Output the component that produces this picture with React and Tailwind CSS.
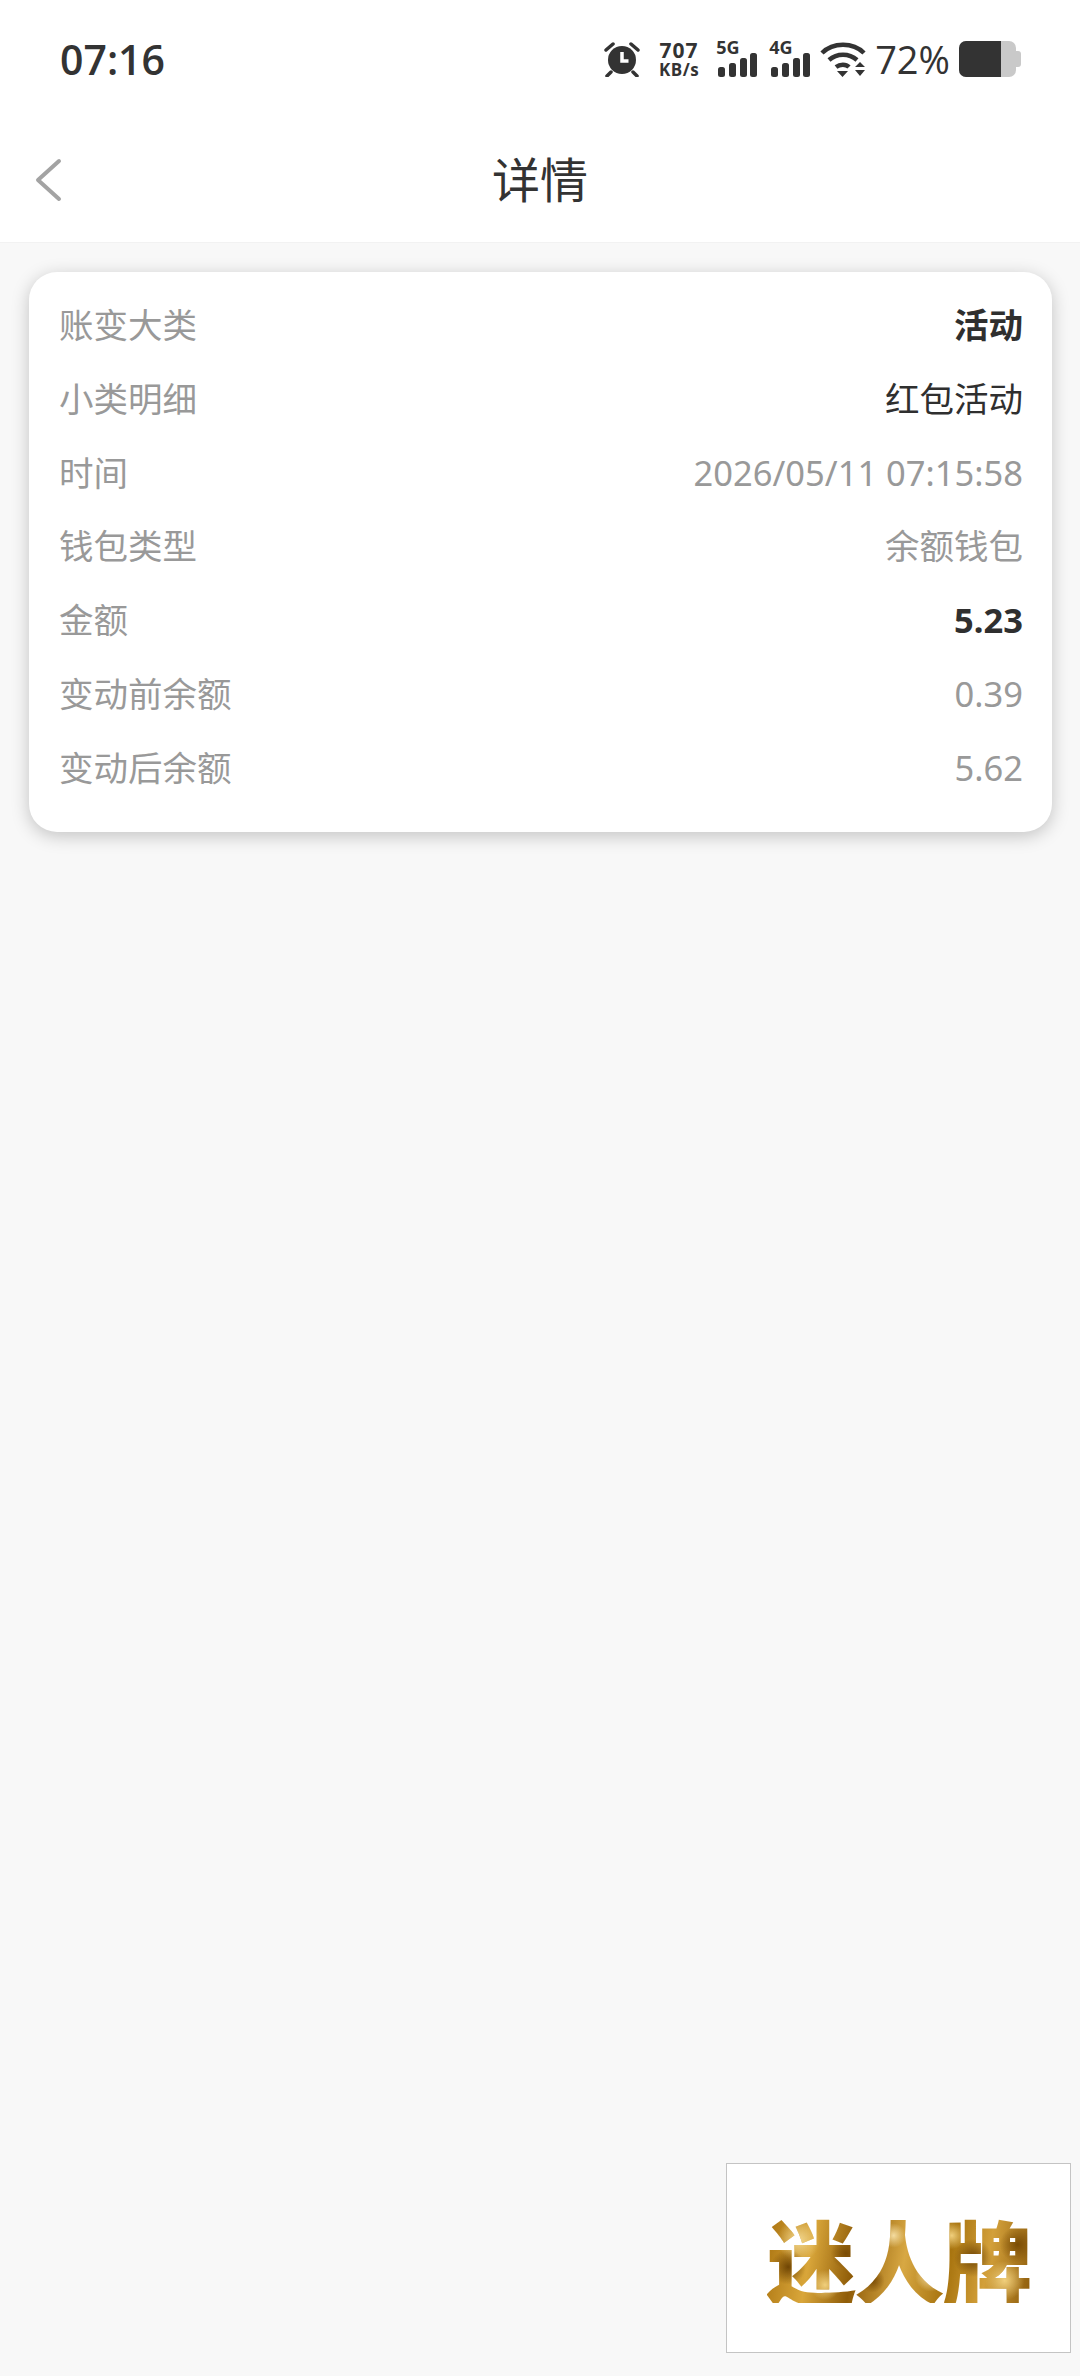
const CJK = "font-['Noto_Sans','Noto_Sans_CJK_SC',sans-serif]";

const rows = [
  { label: "账变大类", value: "活动", valueClass: "text-[#2f2f2f] font-bold" },
  { label: "小类明细", value: "红包活动", valueClass: "text-[#2f2f2f]" },
  { label: "时间", value: "2026/05/11 07:15:58", valueClass: "text-[#999999]" },
  { label: "钱包类型", value: "余额钱包", valueClass: "text-[#999999]" },
  { label: "金额", value: "5.23", valueClass: "text-[#2f2f2f] font-bold" },
  { label: "变动前余额", value: "0.39", valueClass: "text-[#999999]" },
  { label: "变动后余额", value: "5.62", valueClass: "text-[#999999]" },
];

const AlarmIcon = () => (
  <svg width="36" height="36" viewBox="0 0 36 36" fill="none">
    <circle cx="18" cy="19" r="14" fill="#333" />
    <path d="M18 11v9h6.500" stroke="#fff" strokeWidth="3.500" />
    <path d="M2 9l7-6M34 9l-7-6M7 31l-4 4M29 31l4 4" stroke="#333" strokeWidth="3.500" strokeLinecap="round" />
  </svg>
);

const Signal = ({ label }) => (
  <div className="relative w-[41px] h-[36px]">
    <span className="absolute left-0 top-[-3px] text-[18px] leading-[18px] font-bold text-[#333] font-['Open_Sans',sans-serif]">{label}</span>
    <svg className="absolute left-[2px] bottom-0" width="39" height="24" viewBox="0 0 39 24" fill="#333">
      <rect x="0" y="14" width="7" height="10" rx="2.500" />
      <rect x="11" y="10" width="7" height="14" rx="2.500" />
      <rect x="22" y="5" width="7" height="19" rx="2.500" />
      <rect x="32" y="0" width="7" height="24" rx="2.500" />
    </svg>
  </div>
);

const WifiIcon = () => (
  <svg width="46" height="36" viewBox="0 0 46 36" fill="none">
    <path d="M2 12C13 1 33 1 44 12" stroke="#333" strokeWidth="4.500" />
    <path d="M9 19c8-7 20-7 28 0" stroke="#333" strokeWidth="4.500" />
    <path d="M16 26c4-3 10-3 13 0" stroke="#333" strokeWidth="4.500" />
    <path d="M17 30h11l-5.500 6zM35 26l5-5 5 5zM35 29h10l-5 6z" fill="#333" />
  </svg>
);

const Battery = () => (
  <div className="flex items-center">
    <div className="w-[57px] h-[36px] rounded-[7px] overflow-hidden bg-[#c9c9c9] flex">
      <div className="w-[42px] bg-[#333]" />
    </div>
    <div className="w-[5px] h-[16px] rounded-r-[3px] bg-[#c9c9c9]" />
  </div>
);

const StatusBar = () => (
  <div className="h-[118px] flex items-center justify-between pl-[60px] pr-[59px] bg-white">
    <span className="text-[41px] leading-none font-semibold text-[#333] font-['Open_Sans',sans-serif]">07:16</span>
    <div className="flex items-center">
      <AlarmIcon />
      <div className="ml-[18px] mr-[16px] w-[42px] flex flex-col items-center font-bold text-[#333] font-['Open_Sans',sans-serif]">
        <span className="text-[21px] leading-[21px] tracking-[1px]">707</span>
        <span className="text-[17px] leading-[17px] tracking-[0.5px]">KB/s</span>
      </div>
      <Signal label="5G" />
      <div className="w-[12px]" />
      <Signal label="4G" />
      <div className="w-[10px]" />
      <WifiIcon />
      <span className="ml-[9px] mr-[9px] text-[38px] leading-none font-medium text-[#333] font-['Open_Sans',sans-serif]">72%</span>
      <Battery />
    </div>
  </div>
);

const NavBar = () => (
  <div className="relative h-[125px] flex items-center justify-center bg-white border-b border-[#f2f2f2]">
    <svg className="absolute left-[34px] top-[40px]" width="30" height="44" viewBox="0 0 30 44" fill="none">
      <path d="M25 3L4 22l21 19" stroke="#a3a3a3" strokeWidth="4" strokeLinecap="round" strokeLinejoin="round" />
    </svg>
    <span className="text-[48px] text-[#333]">详情</span>
  </div>
);

const App = () => {
  return (
    <div className={`relative w-[1080px] min-h-[2376px] bg-[#f8f8f8] ${CJK}`}>
      <StatusBar />
      <NavBar />
      <div className="pt-[29px] pl-[29px] pr-[28px]">
        <div className="bg-white rounded-[28px] shadow-[0_4px_18px_rgba(0,0,0,0.22)] pt-[16px] pb-[27px] pl-[30px] pr-[29px]">
          {rows.map((row) => (
            <div key={row.label} className="h-[73.8px] flex items-center justify-between text-[34.5px]">
              <span className="text-[#999999]">{row.label}</span>
              <span className={row.valueClass}>{row.value}</span>
            </div>
          ))}
        </div>
      </div>
      {/* floating logo */}
      <div className="absolute left-[726px] top-[2163px] w-[345px] h-[190px] bg-white border border-[#c4c4c4] flex items-center justify-center">
        <span className="text-[90px] leading-none font-black tracking-[-2px] text-transparent bg-clip-text bg-[radial-gradient(circle_at_8%_60%,#6f4504_0,transparent_7%),radial-gradient(circle_at_12%_30%,#f2d78f_0,transparent_9%),radial-gradient(circle_at_22%_80%,#f0cf7c_0,transparent_7%),radial-gradient(circle_at_30%_45%,#7a4c05_0,transparent_8%),radial-gradient(circle_at_40%_75%,#7a4c05_0,transparent_7%),radial-gradient(circle_at_48%_25%,#f4dca0_0,transparent_8%),radial-gradient(circle_at_62%_70%,#f6e0a6_0,transparent_9%),radial-gradient(circle_at_70%_25%,#f0cf7c_0,transparent_7%),radial-gradient(circle_at_78%_50%,#6f4504_0,transparent_9%),radial-gradient(circle_at_90%_75%,#f0cf7c_0,transparent_8%),radial-gradient(circle_at_95%_35%,#7a4c05_0,transparent_7%),linear-gradient(100deg,#a9720f_0%,#d9a63a_18%,#8f5c08_34%,#d8a843_52%,#a8740f_68%,#d3a03a_82%,#8b5a0a_100%)] font-['Noto_Sans_CJK_SC',sans-serif]">迷人牌</span>
      </div>
    </div>
  );
};

export default App;
